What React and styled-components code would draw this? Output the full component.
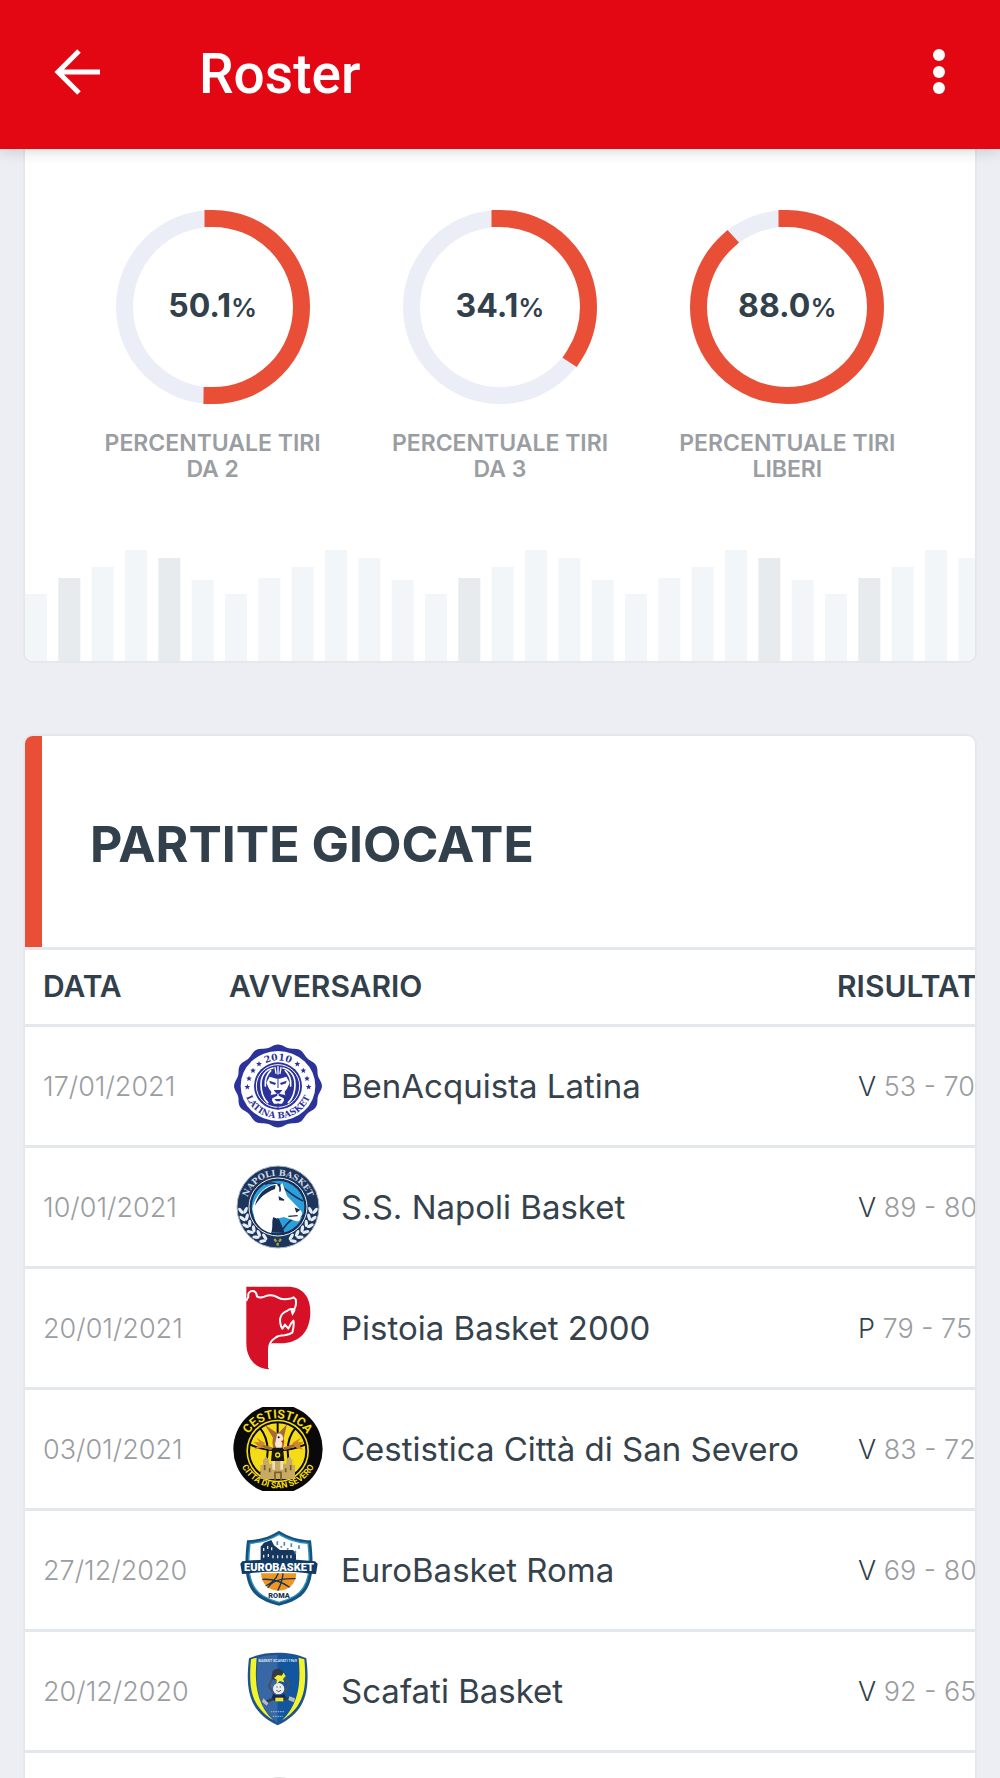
import React, { useId } from 'react'
import styled, { createGlobalStyle } from 'styled-components'

const colors = {
  brand: '#e30613',
  accent: '#e94f37',
  dark: '#31404b',
  text: '#35424c',
  muted: '#9a9da1',
  line: '#e4e7eb',
  page: '#edeef3',
  track: '#ebeef6'
}

const gauges = [
  { value: 50.1, label: 'Percentuale tiri da 2' },
  { value: 34.1, label: 'Percentuale tiri da 3' },
  { value: 88.0, label: 'Percentuale tiri liberi' }
]

const barHeights = [67, 83, 94, 111, 103, 81]
const darkBars = [1, 4, 13, 22, 25]

const GlobalStyle = createGlobalStyle`
  * {
    box-sizing: border-box;
  }
  body {
    margin: 0;
    background: ${colors.page};
    color: ${colors.dark};
    font-family: Inter, "Open Sans", sans-serif;
  }
`

const Screen = styled.div`
  display: flex;
  flex-direction: column;
  height: 100vh;
`

const AppBar = styled.header`
  display: flex;
  align-items: center;
  flex: none;
  height: 149px;
  padding: 0 32px 6px;
  background: ${colors.brand};
  box-shadow: 0 2px 14px rgba(0, 0, 0, 0.16);
  z-index: 1;
`

const IconButton = styled.button`
  display: flex;
  padding: 0;
  border: 0;
  background: none;
  color: #fff;
  cursor: pointer;
`

const AppTitle = styled.h1`
  flex: 1;
  margin: 0 0 0 75px;
  padding-top: 4px;
  color: #fff;
  font: 500 55px/64px Roboto, sans-serif;
`

const Content = styled.main`
  flex: 1;
  min-height: 0;
  padding: 0 23px;
  overflow-y: auto;
  scrollbar-width: none;
`

const Card = styled.section`
  overflow: hidden;
  border: 2px solid ${colors.line};
  border-radius: 10px;
  background: #fff;
`

const StatsCard = styled(Card)`
  margin-bottom: 71px;
  border-top: 0;
  border-top-left-radius: 0;
  border-top-right-radius: 0;
`

const GaugeList = styled.div`
  display: grid;
  grid-template-columns: repeat(3, 1fr);
  padding: 61px 44px 0;
`

const GaugeItem = styled.figure`
  display: flex;
  flex-direction: column;
  align-items: center;
  margin: 0;
`

const GaugeRing = styled.div`
  display: grid;
  place-items: center;
  width: 194px;
  height: 194px;

  > * {
    grid-area: 1 / 1;
  }
`

const GaugeValue = styled.span`
  font-size: 32px;
  font-weight: 700;
  line-height: 40px;

  small {
    font-size: 26px;
    font-weight: 600;
  }
`

const GaugeLabel = styled.figcaption`
  width: 240px;
  margin-top: 26px;
  color: ${colors.muted};
  font-size: 23px;
  font-weight: 600;
  line-height: 26px;
  text-align: center;
  text-transform: uppercase;
`

const BarsGraphic = styled.svg`
  display: block;
  width: 100%;
  height: 112px;
  margin-top: 67px;
`

const CardHeader = styled.header`
  display: flex;
  align-items: center;
  height: 211px;
  padding-left: 48px;
  padding-top: 4px;
  border-left: 17px solid ${colors.accent};
`

const CardTitle = styled.h2`
  margin: 0;
  font-size: 50px;
  font-weight: 700;
  line-height: 56px;
  text-transform: uppercase;
`

const TableScroll = styled.div`
  overflow-x: auto;
  scrollbar-width: none;
`

const GamesTable = styled.table`
  width: 110%;
  border-collapse: collapse;
  table-layout: fixed;
`

const HeadCell = styled.th`
  width: ${props => props.$width || 'auto'};
  height: 77px;
  padding: 0 0 2px ${props => props.$indent || '18px'};
  border-top: 3px solid ${colors.line};
  font-size: 30px;
  font-weight: 600;
  text-align: left;
  text-transform: uppercase;
`

const Cell = styled.td`
  height: 121px;
  padding: 0 0 0 ${props => props.$indent || '18px'};
  border-top: 3px solid ${colors.line};
  color: ${colors.muted};
  font-size: 27px;
  font-weight: 300;
  white-space: nowrap;
`

const Outcome = styled.span`
  color: ${colors.dark};
`

const Team = styled.div`
  display: flex;
  align-items: center;
  gap: 18px;
  color: ${colors.text};
  font-size: 33px;
  font-weight: 400;
`

const Crest = styled.svg`
  flex: none;
  width: 90px;
  height: 84px;
`

const Gauge = ({ value, label }) => {
  const radius = 88.5
  const length = 2 * Math.PI * radius
  const filled = length * value / 100

  return (
    <GaugeItem>
      <GaugeRing>
        <svg width="194" height="194" viewBox="0 0 194 194" fill="none" strokeWidth="17" aria-hidden="true">
          <circle cx="97" cy="97" r={radius} stroke={colors.track} />
          <circle
            cx="97" cy="97" r={radius}
            stroke={colors.accent}
            strokeLinecap="square"
            strokeDasharray={`${filled} ${length}`}
            transform="rotate(-90 97 97)"
          />
        </svg>
        <GaugeValue>{value.toFixed(1)}<small>%</small></GaugeValue>
      </GaugeRing>
      <GaugeLabel>{label}</GaugeLabel>
    </GaugeItem>
  )
}

const Bars = () => (
  <BarsGraphic viewBox="0 0 950 112" preserveAspectRatio="xMinYMax slice" aria-hidden="true">
    {Array.from({ length: 29 }, (_, i) => {
      const height = barHeights[i % barHeights.length]
      return (
        <rect
          key={i}
          x={i * 100 / 3}
          y={112 - height}
          width="22"
          height={height}
          fill={darkBars.includes(i) ? '#e7ebee' : '#f2f6f9'}
        />
      )
    })}
  </BarsGraphic>
)

const star = (cx, cy, r) => Array.from({ length: 10 }, (_, i) => {
  const a = Math.PI * i / 5 - Math.PI / 2
  const d = i % 2 ? r * 0.45 : r
  return `${cx + d * Math.cos(a)},${cy + d * Math.sin(a)}`
}).join(' ')

const scallop = Array.from({ length: 145 }, (_, i) => {
  const a = Math.PI * 2 * i / 144
  const k = 1 + 0.03 * Math.cos(a * 12)
  return `${135 + 128 * k * Math.cos(a)},${126 + 121 * k * Math.sin(a)}`
}).join(' ')

const LatinaCrest = () => {
  const id = useId()
  return (
    <Crest viewBox="0 0 270 252" aria-hidden="true">
      <polygon points={scallop} fill="#2b3299" />
      <ellipse cx="135" cy="126" rx="112" ry="105" fill="#fff" />
      <ellipse cx="135" cy="126" rx="72" ry="71" fill="#2b3299" />
      <ellipse cx="135" cy="126" rx="65" ry="64" fill="none" stroke="#fff" strokeWidth="3" />
      {[[78, 60], [60, 80], [48, 104], [43, 129], [193, 60], [211, 80], [222, 104], [227, 129]].map(([x, y]) => (
        <polygon key={`${x}-${y}`} points={star(x, y, 9)} fill="#2b3299" />
      ))}
      <g fill="none" stroke="#fff" strokeWidth="5" strokeLinecap="round">
        <path d="M120 72C96 78 84 98 84 122c0 24 8 42 20 54M150 72c24 6 36 26 36 50 0 24-8 42-20 54" />
        <path d="M113 80c-12 12-18 28-16 46M157 80c12 12 18 28 16 46" />
        <path d="M135 68v22M126 70l3 18M144 70l-3 18" strokeWidth="4" />
      </g>
      <path d="M110 98l20 6h10l20-6 10 18-8 18-7 9 3 18-11 18h-24l-11-18 3-18-7-9-8-18z" fill="#fff" />
      <path d="M109 110l20 7-3 6-15-5zM161 110l-20 7 3 6 15-5zM122 138h26l-9 11h-8zM113 153l20-4v6l-15 8-3 18-8-12zM157 153l-20-4v6l15 8 3 18 8-12zM124 165h22l-6 7h-10z" fill="#2b3299" />
      <path d="M135 104v28M135 178v18" stroke="#2b3299" strokeWidth="3" />
      <path id={`${id}a`} d="M55 126a80 77 0 0 1 160 0" fill="none" />
      <path id={`${id}b`} d="M33 126a102 97 0 0 0 204 0" fill="none" />
      <g fill="#2b3299" fontFamily="DejaVu Serif, serif" fontWeight="700" textAnchor="middle">
        <text fontSize="28"><textPath href={`#${id}a`} startOffset="50%">2010</textPath></text>
        <text fontSize="26"><textPath href={`#${id}b`} startOffset="50%">LATINA BASKET</textPath></text>
      </g>
    </Crest>
  )
}

// one side of the laurel branch, leaves in pairs along the rim
const Laurel = () => (
  <g fill="#e9eef4">
    {[0, 1, 2, 3, 4, 5].map(i => {
      const deg = 174 - i * 12
      const rad = deg * Math.PI / 180
      return [[112, -32], [98, 32]].map(([r, tilt]) => {
        const x = 135 + r * Math.cos(rad)
        const y = 126 + r * Math.sin(rad)
        return (
          <ellipse key={`${i}${tilt}`} cx={x} cy={y} rx="5" ry="11" transform={`rotate(${deg - 180 + tilt} ${x} ${y})`} />
        )
      })
    })}
  </g>
)

const NapoliCrest = () => {
  const id = useId()
  return (
    <Crest viewBox="0 0 270 252" aria-hidden="true">
      <circle cx="135" cy="126" r="123" fill="#1c355e" stroke="#a9b3c0" strokeWidth="3" />
      <circle cx="135" cy="126" r="87" fill="#1a2d52" stroke="#e8eef5" strokeWidth="3" />
      <circle cx="135" cy="126" r="79" fill="#2a9fdc" />
      <path d="M96 58c42-18 64 28 114 50M96 92c18 34 42 62 54 110M150 192c20-28 36-38 60-40" fill="none" stroke="#1a2d52" strokeWidth="5" />
      <path d="M118 150c20 16 32 34 36 54l-38-2z" fill="#1a2d52" />
      <path d="M132 56c-36 4-66 34-74 76l8 32c8 20 26 34 48 40 8-20 0-38 8-48 10 8 20 2 30 0l38 13c8 1 13-5 12-12 8-7 6-16 0-22l-40-42-14-39-12 13z" fill="#fff" />
      <path d="M128 60c-34 4-56 32-62 62 14-24 32-40 60-50z" fill="#1a2d52" />
      <path d="M138 56c4 10 6 18 2 24M139 97l14 8-13-1zM188 131l10 4-7 5zM166 154l28-2" fill="#1a2d52" stroke="#1a2d52" strokeWidth="4" />
      <Laurel />
      <g transform="matrix(-1 0 0 1 270 0)"><Laurel /></g>
      <path d="M124 222l6 8M144 222l-6 8M134 233v9" stroke="#a8a33c" strokeWidth="7" />
      <path id={id} d="M39 126a96 94 0 0 1 192 0" fill="none" />
      <text fill="#d3dae4" fontFamily="DejaVu Serif, serif" fontWeight="700" fontSize="25" textAnchor="middle">
        <textPath href={`#${id}`} startOffset="50%">NAPOLI BASKET</textPath>
      </text>
    </Crest>
  )
}

const PistoiaCrest = () => (
  <Crest viewBox="0 0 270 252" aria-hidden="true">
    <path d="M40 2h124c45 0 68 30 68 76 0 60-34 94-90 94h-26c-6 4-8 10-8 18v60c-42-2-68-34-68-78z" fill="#d61027" />
    <path
      d="M40 45c2-8 4-10 6-12-2-12 4-18 12-18 9 0 13 6 14 16 8 6 14 4 22 1 14-6 30-4 40 2 10 7 20 6 28 5 10-1 14-1 20-5l6 6c3 12 0 22-4 30-8-3-18 0-20 4-10 4-20 10-22 22-2 8 0 24 6 32l8-12 10 12c4-8 8-18 15-24 4 12-1 24-3 36-9 6-17 7-24 8-10 0-20 2-28 8-12 8-18 16-18 32v59"
      fill="none" stroke="#fff" strokeWidth="6" strokeLinejoin="round"
    />
    <path d="M172 72l6 18 10-17z" fill="#fff" />
  </Crest>
)

const CestisticaCrest = () => {
  const id = useId()
  return (
    <Crest viewBox="0 0 270 252" aria-hidden="true">
      <circle cx="135" cy="126" r="134" fill="#090909" />
      <circle cx="134" cy="132" r="94" fill="#f4dc16" />
      <g fill="none" stroke="#090909" strokeWidth="6">
        <circle cx="134" cy="132" r="86" />
        <path d="M134 46v172M50 112c50 24 116 24 168 0M80 62c32 38 32 100 0 140M188 62c-32 38-32 100 0 140" />
      </g>
      <path d="M82 216v-42h8v-14l9-12 9 12v10h14v-18h24v18h14v-10l9-12 9 12v14h8v42z" fill="#c9aa65" />
      <path d="M95 174v16M173 174v16M126 220v-24h18v24M110 184v12M158 184v12" stroke="#765f2c" strokeWidth="5" fill="none" />
      <path d="M120 92l-24-38 36 24 8-3 22-23-10 42c6 20-4 38-18 38s-18-22-14-40z" fill="#a8683c" />
      <path d="M132 82c10-8 20 2 18 18l-6 30h-12l-6-18z" fill="#f7e8cf" />
      <circle cx="137" cy="91" r="3" fill="#111" />
      <path d="M144 102l9-3-3 12z" fill="#c22929" />
      <path d="M118 122h32l4 40h-40z" fill="#161616" />
      <path d="M116 126l-38-14M152 126l40-14" stroke="#a8683c" strokeWidth="9" />
      <path d="M70 92l10 14-18-2 12 12-10 12 20-6 12-14zM204 92l-10 14 18-2-12 12 10 12-20-6-12-14z" fill="#cf872f" />
      <path d="M122 162v26M146 162v26" stroke="#eee1bb" strokeWidth="8" />
      <path id={`${id}a`} d="M34 128a100 94 0 0 1 200 0" fill="none" />
      <path id={`${id}b`} d="M14 126a121 118 0 0 0 242 0" fill="none" />
      <g fill="#f4dc16" fontFamily="Roboto, sans-serif" fontWeight="700" textAnchor="middle">
        <text fontSize="37"><textPath href={`#${id}a`} startOffset="50%">CESTISTICA</textPath></text>
        <text fontSize="26"><textPath href={`#${id}b`} startOffset="50%">CITTÀ DI SAN SEVERO</textPath></text>
      </g>
      <circle cx="134" cy="144" r="6" fill="none" stroke="#f4dc16" strokeWidth="4" />
    </Crest>
  )
}

const EurobasketCrest = () => (
  <Crest viewBox="0 0 270 252" aria-hidden="true">
    <path d="M138 8c27 18 60 28 96 29 9 78 10 146-43 176-19 11-36 16-53 20-17-4-34-9-53-20C32 183 33 115 42 37c36-1 69-11 96-29z" fill="#17517e" />
    <path d="M138 19c27 16 57 25 87 27 8 66 8 130-40 158-17 10-32 15-47 19-15-4-30-9-47-19-48-28-48-92-40-158 30-2 60-11 87-27z" fill="#fff" stroke="#2c91bd" strokeWidth="4" />
    <path d="M83 112V56l10-12 22-8 8 16 18 14h38c6 4 10 8 10 16v30z" fill="#16365e" />
    <path d="M92 60v9M104 54v9M116 58v9M92 80v9M106 78v9M120 82v9M134 82v9M148 82v9M162 82v9M174 82v9" stroke="#d7e5ee" strokeWidth="4" />
    <path d="M133 40v11M154 42v11M175 46v11M198 52v11M145 54v5M187 68v9M164 60v5" stroke="#4f8aaa" strokeWidth="5" />
    <path d="M84 136c2 34 24 52 53 52s51-18 53-52z" fill="#ef9622" />
    <path d="M88 154c32-2 63 10 82 24M104 180c12-20 34-30 84-28M136 136c-8 20-24 32-38 38M150 136c-2 20-8 38-16 52" fill="none" stroke="#173557" strokeWidth="4" />
    <path d="M28 100c72-8 146-8 218 0l8 7-5 31-15-1c-64-9-128-9-192 0l-15 1-5-31z" fill="#123a66" />
    <g fill="#fff" fontFamily="Roboto, sans-serif" fontWeight="900" textAnchor="middle">
      <text x="138" y="128" fontSize="33">EUROBASKET</text>
      <text x="138" y="211" fontSize="22" fill="#173557">ROMA</text>
    </g>
  </Crest>
)

const ScafatiCrest = () => (
  <Crest viewBox="0 0 270 252" aria-hidden="true">
    <path d="M48 28c26-12 54-17 86-17s60 5 86 17c11 92 2 160-86 201C46 188 37 120 48 28z" fill="#1e5390" />
    <path d="M54 31l17-5c-6 68-5 134 50 188C54 172 46 118 54 31zM214 31l-17-5c6 68 5 134-50 188 67-42 75-96 67-183z" fill="#f2f52c" />
    <path d="M75 26c18-6 38-8 59-8v204c-62-48-68-112-59-196z" fill="#3767a4" />
    <path d="M134 18c21 0 41 2 59 8 9 84 3 148-59 196z" fill="#1256a0" />
    <text x="134" y="38" fontFamily="Roboto, sans-serif" fontWeight="700" fontSize="11" fill="#dae7f5" textAnchor="middle">BASKET SCAFATI 1969</text>
    <path d="M119 66c10-10 26-8 32 2l-4 18-10 10-22-5z" fill="#343946" />
    <path d="M117 90l-9 22 15 24M155 86l13 18-13 28" fill="none" stroke="#4a4f5c" strokeWidth="6" />
    <path d="M134 78l12 2 6-9 6 11-8 8 4 10-14-4-9 10v-14l-8-5z" fill="#f2f02c" />
    <circle cx="137" cy="119" r="17" fill="#eceeee" />
    <path d="M130 114h4M140 114h4M130 124l7 4 7-4" fill="none" stroke="#555" strokeWidth="3" />
    <path d="M121 134c9 6 24 6 32 0l8 16c-16 9-32 9-46 0z" fill="#17254d" />
    <path d="M127 146h24v11h-24z" fill="#f1e71f" />
    <path d="M120 150l-20 8M154 150l20-2" stroke="#343946" strokeWidth="8" />
    <path d="M91 148l15 14-5 8-14-12zM169 142l17 6-3 12-17-7z" fill="#b8bcc2" />
    <path d="M113 188h42M119 202h30" stroke="#81a5cf" strokeWidth="4" strokeDasharray="5 2" />
  </Crest>
)

const PlainCrest = () => (
  <Crest viewBox="0 0 270 252" aria-hidden="true">
    <circle cx="140" cy="136" r="114" fill="#fff" stroke="#d3d3d5" strokeWidth="6" />
  </Crest>
)

const games = [
  { date: '17/01/2021', team: 'BenAcquista Latina', outcome: 'V', score: '53 - 70', Logo: LatinaCrest },
  { date: '10/01/2021', team: 'S.S. Napoli Basket', outcome: 'V', score: '89 - 80', Logo: NapoliCrest },
  { date: '20/01/2021', team: 'Pistoia Basket 2000', outcome: 'P', score: '79 - 75', Logo: PistoiaCrest },
  { date: '03/01/2021', team: 'Cestistica Città di San Severo', outcome: 'V', score: '83 - 72', Logo: CestisticaCrest },
  { date: '27/12/2020', team: 'EuroBasket Roma', outcome: 'V', score: '69 - 80', Logo: EurobasketCrest },
  { date: '20/12/2020', team: 'Scafati Basket', outcome: 'V', score: '92 - 65', Logo: ScafatiCrest },
  { date: '', team: '', outcome: '', score: '', Logo: PlainCrest }
]

const App = () => (
  <Screen>
    <GlobalStyle />
    <AppBar>
      <IconButton type="button" aria-label="Indietro">
        <svg width="92" height="68" viewBox="0 0 92 68" fill="none" stroke="currentColor" strokeWidth="5">
          <path d="M68 34H27M47 13L26 34l21 21" />
        </svg>
      </IconButton>
      <AppTitle>Roster</AppTitle>
      <IconButton type="button" aria-label="Altre opzioni">
        <svg width="58" height="68" viewBox="0 0 58 68" fill="currentColor">
          <circle cx="29" cy="17" r="6" />
          <circle cx="29" cy="34" r="6" />
          <circle cx="29" cy="50" r="6" />
        </svg>
      </IconButton>
    </AppBar>

    <Content>
      <StatsCard>
        <GaugeList>
          {gauges.map(gauge => <Gauge key={gauge.label} {...gauge} />)}
        </GaugeList>
        <Bars />
      </StatsCard>

      <Card>
        <CardHeader>
          <CardTitle>Partite giocate</CardTitle>
        </CardHeader>
        <TableScroll>
          <GamesTable>
            <thead>
              <tr>
                <HeadCell scope="col" $width="190px">Data</HeadCell>
                <HeadCell scope="col" $indent="14px">Avversario</HeadCell>
                <HeadCell scope="col" $width="251px">Risultati</HeadCell>
              </tr>
            </thead>
            <tbody>
              {games.map(({ date, team, outcome, score, Logo }, i) => (
                <tr key={i}>
                  <Cell>{date}</Cell>
                  <Cell>
                    <Team><Logo />{team}</Team>
                  </Cell>
                  <Cell $indent="39px"><Outcome>{outcome}</Outcome> {score}</Cell>
                </tr>
              ))}
            </tbody>
          </GamesTable>
        </TableScroll>
      </Card>
    </Content>
  </Screen>
)

export default App
